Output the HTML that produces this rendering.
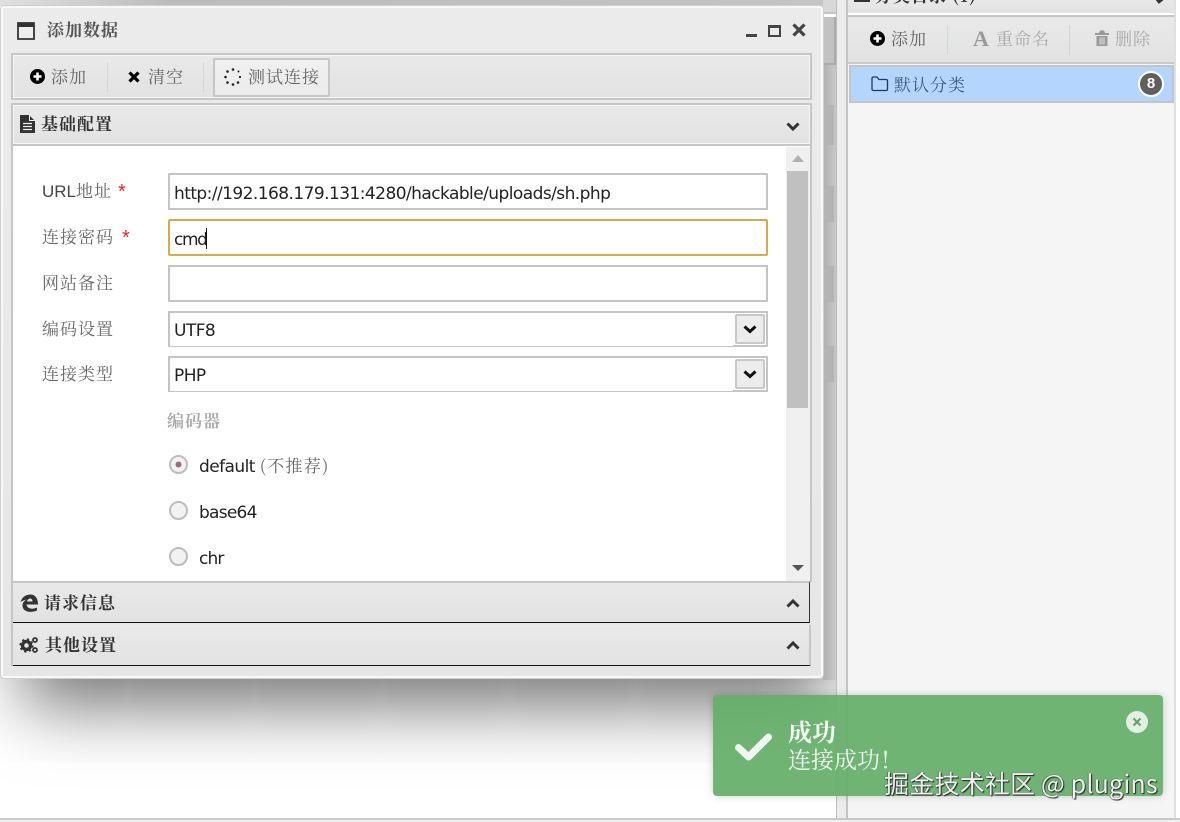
<!DOCTYPE html>
<html><head><meta charset="utf-8"><style>
html,body{margin:0;padding:0}
body{width:1180px;height:822px;overflow:hidden;position:relative;background:#fff;font-family:"Liberation Sans","Noto Serif CJK SC",serif;color:#333}
.a{position:absolute;box-sizing:border-box}
.t{position:absolute;white-space:nowrap;line-height:20px}
.lbl{font-size:17px;color:#666;letter-spacing:1px;font-family:"Liberation Sans","Noto Serif CJK SC",serif}
.bar{background:linear-gradient(#e9e9e9,#e2e2e2)}
.inp{position:absolute;left:168px;width:600px;height:37px;border:2px solid #c4c4c4;background:#fff;box-sizing:border-box}
.val{position:absolute;left:174px;font-size:17px;color:#222;line-height:20px;white-space:nowrap;font-family:"DejaVu Sans",sans-serif;letter-spacing:-.56px}
.hd{font-size:17px;color:#333;font-weight:700;letter-spacing:1px;font-family:"Noto Serif CJK SC",serif}
.btxt{font-size:17px;color:#666;letter-spacing:1px;font-family:"Noto Serif CJK SC",serif}
svg{position:absolute;overflow:visible}
</style></head><body>

<!-- backdrop -->
<div class="a" style="left:0;top:0;width:836px;height:6px;background:linear-gradient(90deg,#e0e0e0,#bcbcbc 20%,#c4c4c4)"></div>
<div class="a" style="left:823px;top:0;width:14px;height:14px;background:#d8d8d8;border-bottom:2px solid #c6c6c6"></div>
<div class="a" style="left:823px;top:17px;width:13px;height:48px;background:#c2c2c2;border-right:2px solid #aaa;border-bottom:2px solid #aaa"></div>

<!-- window shadow, clipped to the left pane -->
<div class="a" style="left:0;top:0;width:836px;height:818px;overflow:hidden">
  <div class="a" style="left:45px;top:600px;width:760px;height:70px;background:#999;box-shadow:0 14px 70px 22px rgba(0,0,0,.55)"></div>
</div>

<div class="a" style="left:823px;top:65px;width:13px;height:615px;background:linear-gradient(90deg,#b0b0b0,#c8c8c8)"></div>
<div class="a" style="left:824px;top:105px;width:10px;height:40px;background:#b4b4b4"></div>
<div class="a" style="left:824px;top:186px;width:10px;height:36px;background:#b4b4b4"></div>
<div class="a" style="left:824px;top:266px;width:10px;height:36px;background:#b4b4b4"></div>
<div class="a" style="left:824px;top:346px;width:10px;height:36px;background:#b4b4b4"></div>

<div class="a" style="left:836px;top:0;width:1px;height:818px;background:#bdbdbd"></div>
<div class="a" style="left:837px;top:0;width:9px;height:818px;background:#ececec"></div>
<div class="a" style="left:846px;top:0;width:2px;height:818px;background:#c4c4c4"></div>

<!-- right panel -->
<div class="a" style="left:848px;top:0;width:326px;height:818px;background:#f5f5f5"></div>
<div class="a" style="left:1174px;top:0;width:2px;height:818px;background:#e0e0e0"></div>
<div class="a bar" style="left:848px;top:0;width:326px;height:13px"></div>
<div class="t hd" style="left:875px;top:-15px;">分类目录 (1)</div>
<div class="a" style="left:854px;top:-1px;width:16px;height:3px;background:#333"></div>
<div class="a" style="left:848px;top:13px;width:326px;height:3px;background:#fff"></div>
<div class="a" style="left:848px;top:15px;width:326px;height:2px;background:#c6c6c6"></div>
<svg style="left:1155px;top:0" width="10" height="4"><path d="M0 -3L4 2L9 -2" fill="none" stroke="#333" stroke-width="2.600"/></svg>
<div class="a bar" style="left:848px;top:17px;width:326px;height:45px"></div>
<div class="a" style="left:848px;top:62px;width:326px;height:2px;background:#c9c9c9"></div>
<svg style="left:870px;top:31px" width="16" height="16"><circle cx="7.5" cy="7.500" r="7.500" fill="#000"/><path d="M7.500 3.500v8M3.500 7.500h8" stroke="#fff" stroke-width="2.600"/></svg>
<div class="t btxt" style="left:891px;top:28px">添加</div>
<div class="a" style="left:947px;top:25px;width:1px;height:30px;background:#cdd8d8"></div>
<div class="t" style="left:973px;top:28px;font:700 22px/22px 'Liberation Serif',serif;color:#999">A</div>
<div class="t btxt" style="left:996px;top:28px;color:#aaa">重命名</div>
<div class="a" style="left:1069px;top:25px;width:1px;height:30px;background:#d4d4d4"></div>
<svg style="left:1095px;top:30px" width="15" height="17"><path d="M0 3h14v2H0zM4 3l1-2.500h4l1 2.500M1.500 6h11v10h-11z" fill="#999"/><path d="M5 7.500v7M7 7.500v7M9 7.500v7" stroke="#e4e4e4" stroke-width="1"/></svg>
<div class="t btxt" style="left:1115px;top:28px;color:#aaa">删除</div>

<div class="a" style="left:849px;top:65px;width:325px;height:38px;background:#b4d5fe;border:2px solid #c4c4c4"></div>
<svg style="left:871px;top:76px" width="18" height="16"><path d="M1 4V2.500Q1 1 2.500 1H6L8 3.500H15Q16.500 3.500 16.500 5V13Q16.500 14.500 15 14.500H2.500Q1 14.500 1 13Z" fill="none" stroke="#1f3a55" stroke-width="1.300"/></svg>
<div class="t" style="left:894px;top:74px;font-size:17px;color:#3b5b7c;letter-spacing:1px;font-family:'Noto Serif CJK SC',serif">默认分类</div>
<div class="a" style="left:1138px;top:71px;width:26px;height:26px;border-radius:50%;background:#5f5f5f;border:2px solid #fff;color:#fff;font:700 15px/22px 'Liberation Sans',sans-serif;text-align:center">8</div>

<!-- bottom line -->
<div class="a" style="left:0;top:818px;width:1180px;height:2px;background:#c8c8c8"></div>
<div class="a" style="left:0;top:820px;width:1180px;height:2px;background:#f0f0f0"></div>

<!-- window -->
<div class="a" style="left:1px;top:6px;width:822px;height:672px;background:linear-gradient(#ebebeb,#e6e6e6);border:2px solid #f8f8f8;outline:1px solid #cfcfcf;border-radius:3px"></div>

<!-- title -->
<svg style="left:17px;top:22px" width="19" height="19"><path d="M1 1h16v16H1z" fill="#eee" stroke="#333" stroke-width="1.800"/><path d="M1 1h16v4H1z" fill="#333"/></svg>
<div class="t hd" style="left:47px;top:19px;color:#555;">添加数据</div>
<div class="a" style="left:746px;top:34px;width:11px;height:3px;background:#444"></div>
<div class="a" style="left:768px;top:25px;width:13px;height:12px;border:2px solid #444;border-top-width:3px"></div>
<svg style="left:792px;top:23px" width="14" height="14"><path d="M1.500 1.500L12.500 12.500M12.500 1.500L1.500 12.500" stroke="#444" stroke-width="3.200"/></svg>

<!-- toolbar -->
<div class="a bar" style="left:11px;top:53px;width:801px;height:47px;border:2px solid #c6c6c6;outline:1px solid #f6f6f6;outline-offset:-3px"></div>
<svg style="left:30px;top:69px" width="16" height="16"><circle cx="7.500" cy="7.500" r="7.500" fill="#000"/><path d="M7.500 3.500v8M3.500 7.500h8" stroke="#fff" stroke-width="2.600"/></svg>
<div class="t btxt" style="left:51px;top:66px">添加</div>
<div class="a" style="left:107px;top:62px;width:1px;height:30px;background:#d6d6d6"></div>
<svg style="left:128px;top:71px" width="12" height="12"><path d="M1.500 1.500L10.500 10.500M10.500 1.500L1.500 10.500" stroke="#000" stroke-width="3.200"/></svg>
<div class="t btxt" style="left:148px;top:66px">清空</div>
<div class="a" style="left:203px;top:62px;width:1px;height:30px;background:#d6d6d6"></div>
<div class="a" style="left:213px;top:58px;width:117px;height:39px;background:linear-gradient(#f0f0f0,#ebebeb);border:2px solid #c6c6c6;border-radius:2px"></div>
<svg style="left:224px;top:68px" width="18" height="18"><g fill="#222"><circle cx="9" cy="1.500" r="1.300"/><circle cx="14.500" cy="3.500" r="1"/><circle cx="16" cy="9" r="1.100"/><circle cx="14" cy="14.500" r="1.300"/><circle cx="9" cy="16.500" r="1.300"/><circle cx="3.500" cy="14.500" r="1.300"/><circle cx="1.500" cy="9" r="1.300"/><circle cx="3.500" cy="3.500" r="1.300"/></g></svg>
<div class="t btxt" style="left:248px;top:66px">测试连接</div>

<!-- accordion 1 -->
<div class="a bar" style="left:11px;top:103px;width:801px;height:43px;border:2px solid #c6c6c6;outline:1px solid #f6f6f6;outline-offset:-3px"></div>
<svg style="left:20px;top:115px" width="15" height="18"><path d="M0 0H9L15 6V18H0Z" fill="#333"/><path d="M9.500 0V5.500H15" fill="none" stroke="#eee" stroke-width="1"/><path d="M3 8.500h9M3 11.500h9M3 14.500h9" stroke="#eee" stroke-width="1.200"/></svg>
<div class="t hd" style="left:41px;top:113px">基础配置</div>
<svg style="left:786px;top:122px" width="14" height="10"><path d="M1.500 1.500L7 7L12.500 1.500" fill="none" stroke="#333" stroke-width="3"/></svg>

<!-- body -->
<div class="a" style="left:11px;top:146px;width:801px;height:436px;background:#fff;border-left:2px solid #c6c6c6;border-right:2px solid #c6c6c6"></div>

<!-- scrollbar -->
<div class="a" style="left:786px;top:147px;width:24px;height:434px;background:#f0f0f0"></div>
<div class="a" style="left:787px;top:171px;width:21px;height:237px;background:#c0c0c0"></div>
<div class="a" style="left:792px;top:155px;border:6px solid transparent;border-top:0;border-bottom:7px solid #b0b0b0"></div>
<div class="a" style="left:792px;top:565px;border:6px solid transparent;border-bottom:0;border-top:6px solid #555"></div>

<!-- form -->
<div class="t lbl" style="left:42px;top:182px"><span style="letter-spacing:0;color:#444">URL</span>地址</div>
<div class="t" style="left:118px;top:182px;font-size:20px;color:#e22">*</div>
<div class="inp" style="top:173px"></div>
<div class="val" style="top:184px">http://192.168.179.131:4280/hackable/uploads/sh.php</div>

<div class="t lbl" style="left:42px;top:228px">连接密码</div>
<div class="t" style="left:122px;top:228px;font-size:20px;color:#e22">*</div>
<div class="inp" style="top:219px;border-color:#dca94a;border-radius:2px"></div>
<div class="val" style="top:230px;letter-spacing:-1.400px">cmd</div>
<div class="a" style="left:206px;top:228px;width:1px;height:21px;background:#111"></div>

<div class="t lbl" style="left:42px;top:274px">网站备注</div>
<div class="inp" style="top:265px"></div>

<div class="t lbl" style="left:42px;top:320px">编码设置</div>
<div class="inp" style="top:311px;height:36px;border-bottom-width:1px;border-right-width:0"></div>
<div class="a" style="left:733px;top:311px;width:35px;height:36px;border:2px solid #c4c4c4;border-left:0;background:#fff"></div>
<div class="a" style="left:735px;top:314px;width:30px;height:30px;background:#ececec;border:2px solid #c8c8c8;border-radius:2px"></div>
<svg style="left:743px;top:325px" width="14" height="9"><path d="M1.500 1.500L7 6.500L12.500 1.500" fill="none" stroke="#111" stroke-width="3"/></svg>
<div class="val" style="top:321px">UTF8</div>

<div class="t lbl" style="left:42px;top:365px">连接类型</div>
<div class="inp" style="top:356px;height:36px;border-bottom-width:1px;border-right-width:0"></div>
<div class="a" style="left:733px;top:356px;width:35px;height:36px;border:2px solid #c4c4c4;border-left:0;background:#fff"></div>
<div class="a" style="left:735px;top:359px;width:30px;height:30px;background:#ececec;border:2px solid #c8c8c8;border-radius:2px"></div>
<svg style="left:743px;top:370px" width="14" height="9"><path d="M1.500 1.500L7 6.500L12.500 1.500" fill="none" stroke="#111" stroke-width="3"/></svg>
<div class="val" style="top:366px">PHP</div>

<div class="t" style="left:167px;top:410px;font-size:17px;font-weight:700;color:#aaa;letter-spacing:1px;font-family:'Noto Serif CJK SC',serif">编码器</div>

<svg style="left:169px;top:455px" width="20" height="20"><circle cx="9.500" cy="9.500" r="8.500" fill="#f2f2f2" stroke="#bdbdbd" stroke-width="2"/><circle cx="9.500" cy="9.500" r="3" fill="#a06a7c"/></svg>
<div class="val" style="left:199px;top:455px">default <span style="font-family:'Noto Serif CJK SC',serif;color:#666;letter-spacing:1.300px">(不推荐)</span></div>
<svg style="left:169px;top:501px" width="20" height="20"><circle cx="9.500" cy="9.500" r="8.500" fill="#f2f2f2" stroke="#bdbdbd" stroke-width="2"/></svg>
<div class="val" style="left:199px;top:503px;letter-spacing:-.75px">base64</div>
<svg style="left:169px;top:547px" width="20" height="20"><circle cx="9.500" cy="9.500" r="8.500" fill="#f2f2f2" stroke="#bdbdbd" stroke-width="2"/></svg>
<div class="val" style="left:199px;top:549px;letter-spacing:-.9px">chr</div>

<!-- accordion 2 / 3 -->
<div class="a bar" style="left:13px;top:581px;width:797px;height:42px;border-top:2px solid #c6c6c6;border-bottom:1.500px solid #111;border-right:1px solid #333"></div>
<div class="a" style="left:11px;top:582px;width:2px;height:84px;background:#c6c6c6"></div>
<svg style="left:20px;top:594px" width="18" height="18"><path fill-rule="evenodd" d="M.5 8C2 3 6 .5 10.500 .5C15 .5 18 4 18 10.500H6.500C7 14.500 12 16 17 13.500V16.500C10 19.500 2.500 17.500 2.500 11.500C2.500 9 4 7 6.500 5.500C4 6 2 7 .5 8ZM7 7.500H12.500C12.500 3.500 8 3.500 7 7.500Z" fill="#333"/></svg>
<div class="t hd" style="left:44px;top:592px">请求信息</div>
<svg style="left:786px;top:599px" width="14" height="10"><path d="M1.500 7.500L7 2L12.500 7.500" fill="none" stroke="#333" stroke-width="3"/></svg>

<div class="a bar" style="left:13px;top:625px;width:798px;height:41px;border-bottom:1.500px solid #111;border-right:2px solid #c6c6c6"></div>
<svg style="left:20px;top:636px" width="19" height="18"><circle cx="6.500" cy="9.500" r="4" fill="none" stroke="#333" stroke-width="3.400"/><circle cx="6.500" cy="9.500" r="6.200" fill="none" stroke="#333" stroke-width="1.800" stroke-dasharray="2.200 2.700"/><circle cx="15" cy="4" r="2" fill="none" stroke="#333" stroke-width="1.800"/><circle cx="15" cy="14" r="2" fill="none" stroke="#333" stroke-width="1.800"/></svg>
<div class="t hd" style="left:45px;top:634px">其他设置</div>
<svg style="left:786px;top:641px" width="14" height="10"><path d="M1.500 7.500L7 2L12.500 7.500" fill="none" stroke="#333" stroke-width="3"/></svg>

<!-- toast -->
<div class="a" style="left:713px;top:695px;width:450px;height:101px;background:rgba(101,174,105,.93);border-radius:4px;box-shadow:0 0 8px rgba(0,0,0,.18)"></div>
<svg style="left:735px;top:731px" width="38" height="32"><path d="M3.500 16.500L13.500 26L33.500 6" fill="none" stroke="#f1f7f1" stroke-width="7" stroke-linecap="round" stroke-linejoin="round"/></svg>
<div class="t" style="left:788px;top:719px;font-size:24px;line-height:24px;font-weight:700;color:#f4faf4;font-family:'Noto Serif CJK SC',serif">成功</div>
<div class="t" style="left:788px;top:746px;font-size:23px;line-height:26px;color:#f4faf4;font-family:'Noto Serif CJK SC',serif">连接成功<span style="margin-left:2px">!</span></div>
<div class="a" style="left:1126px;top:711px;width:22px;height:22px;border-radius:50%;background:#e2efe2"></div>
<svg style="left:1132px;top:717px" width="10" height="10"><path d="M1.500 1.500L8.500 8.500M8.500 1.500L1.500 8.500" stroke="#5da561" stroke-width="2"/></svg>

<!-- watermark -->
<div class="t" style="left:884px;top:768px;font-size:25px;line-height:30px;letter-spacing:.2px;color:#f0f0f0;text-shadow:1px 1px 1px #222,-0.500px 0 1px #444;font-family:'Noto Sans CJK SC',sans-serif;font-weight:400">掘金技术社区 @ plugins</div>
</body></html>
